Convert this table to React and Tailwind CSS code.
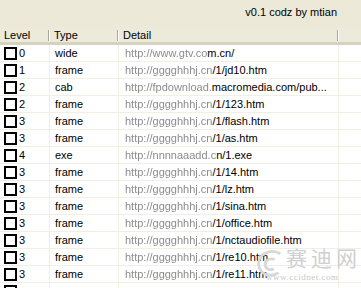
import React from "react";

const rows = [
  ["0", "wide", "http://www.gtv.co", "m.cn/"],
  ["1", "frame", "http://gggghhhj.cn", "/1/jd10.htm"],
  ["2", "cab", "http://fpdownload.", "macromedia.com/pub..."],
  ["2", "frame", "http://gggghhhj.cn", "/1/123.htm"],
  ["3", "frame", "http://gggghhhj.cn", "/1/flash.htm"],
  ["3", "frame", "http://gggghhhj.cn", "/1/as.htm"],
  ["4", "exe", "http://nnnnaaadd.c", "n/1.exe"],
  ["3", "frame", "http://gggghhhj.cn", "/1/14.htm"],
  ["3", "frame", "http://gggghhhj.cn", "/1/lz.htm"],
  ["3", "frame", "http://gggghhhj.cn", "/1/sina.htm"],
  ["3", "frame", "http://gggghhhj.cn", "/1/office.htm"],
  ["3", "frame", "http://gggghhhj.cn", "/1/nctaudiofile.htm"],
  ["3", "frame", "http://gggghhhj.cn", "/1/re10.htm"],
  ["3", "frame", "http://gggghhhj.cn", "/1/re11.htm"],
];

function HeadCell({ label, width, last }) {
  return (
    <div className={`flex h-full items-center ${width}`}>
      <div className="flex-1 pl-[4px] truncate">{label}</div>
      {!last && (
        <div className="flex h-[11px] mt-[1px]">
          <div className="w-px h-full bg-[#aca899]" />
          <div className="w-px h-full bg-white" />
        </div>
      )}
    </div>
  );
}

export default function App() {
  return (
    <div
      className="relative w-[361px] h-[288px] overflow-hidden bg-[#ece9d8] text-[11px] leading-none text-black"
      style={{ fontFamily: '"Liberation Sans", Arial, sans-serif' }}
    >
      <div className="h-[28px] flex items-center justify-end pr-[24px] pb-[4px]">
        v0.1 codz by mtian
      </div>
      <div className="bg-white">
        <div className="flex h-[17px] bg-[#ebeadb] border-b-[3px] border-[#d6d2c2]">
          <HeadCell label="Level" width="w-[50px]" />
          <HeadCell label="Type" width="w-[69px]" />
          <HeadCell label="Detail" width="w-[220px]" />
          <HeadCell label="" width="w-[22px]" last />
        </div>
        {rows.map((r, i) => (
          <div key={i} className="flex h-[17px] border-b border-[#f1efe2]">
            <div className="w-[50px] flex items-center pl-[4px] border-r border-[#f1efe2]">
              <div className="w-[13px] h-[13px] border-2 border-black bg-white" />
              <span className="ml-[2px]">{r[0]}</span>
            </div>
            <div className="w-[69px] flex items-center pl-[5px] border-r border-[#f1efe2]">
              {r[1]}
            </div>
            <div className="w-[220px] flex items-center pl-[6px] border-r border-[#f1efe2] whitespace-nowrap overflow-hidden">
              <span className="text-[#8c8c8c] blur-[0.5px]">{r[2]}</span>
              <span>{r[3]}</span>
            </div>
            <div className="w-[22px]" />
          </div>
        ))}
        <div className="flex h-[17px]">
          <div className="w-[50px] flex items-center pl-[4px] border-r border-[#f1efe2]">
            <div className="w-[13px] h-[13px] border-2 border-black bg-white" />
          </div>
          <div className="w-[69px] border-r border-[#f1efe2]" />
          <div className="w-[220px] border-r border-[#f1efe2]" />
          <div className="w-[22px]" />
        </div>
      </div>
      <div className="absolute left-[254px] top-[246px] pointer-events-none">
        <svg width="32" height="38" viewBox="0 0 34 40" fill="none" stroke="#d8d8d8" strokeWidth="3">
          <path d="M28 8 C18 2 4 8 5 20 C6 30 18 34 26 28" />
          <path d="M22 14 C16 12 11 16 12 21 C13 25 18 26 21 24" />
        </svg>
      </div>
      <div
        className="absolute left-[286px] top-[247px] whitespace-nowrap text-[21px] leading-none tracking-[4px] text-[#d0d0d0] pointer-events-none"
        style={{ fontFamily: '"Noto Sans CJK SC", serif' }}
      >
        赛迪网
      </div>
      <div
        className="absolute left-[266px] top-[273px] whitespace-nowrap text-[9px] leading-none tracking-[0.5px] text-[#c8c8c8] pointer-events-none"
        style={{ fontFamily: '"Liberation Serif", serif' }}
      >
        www.ccidnet.com
      </div>
    </div>
  );
}
